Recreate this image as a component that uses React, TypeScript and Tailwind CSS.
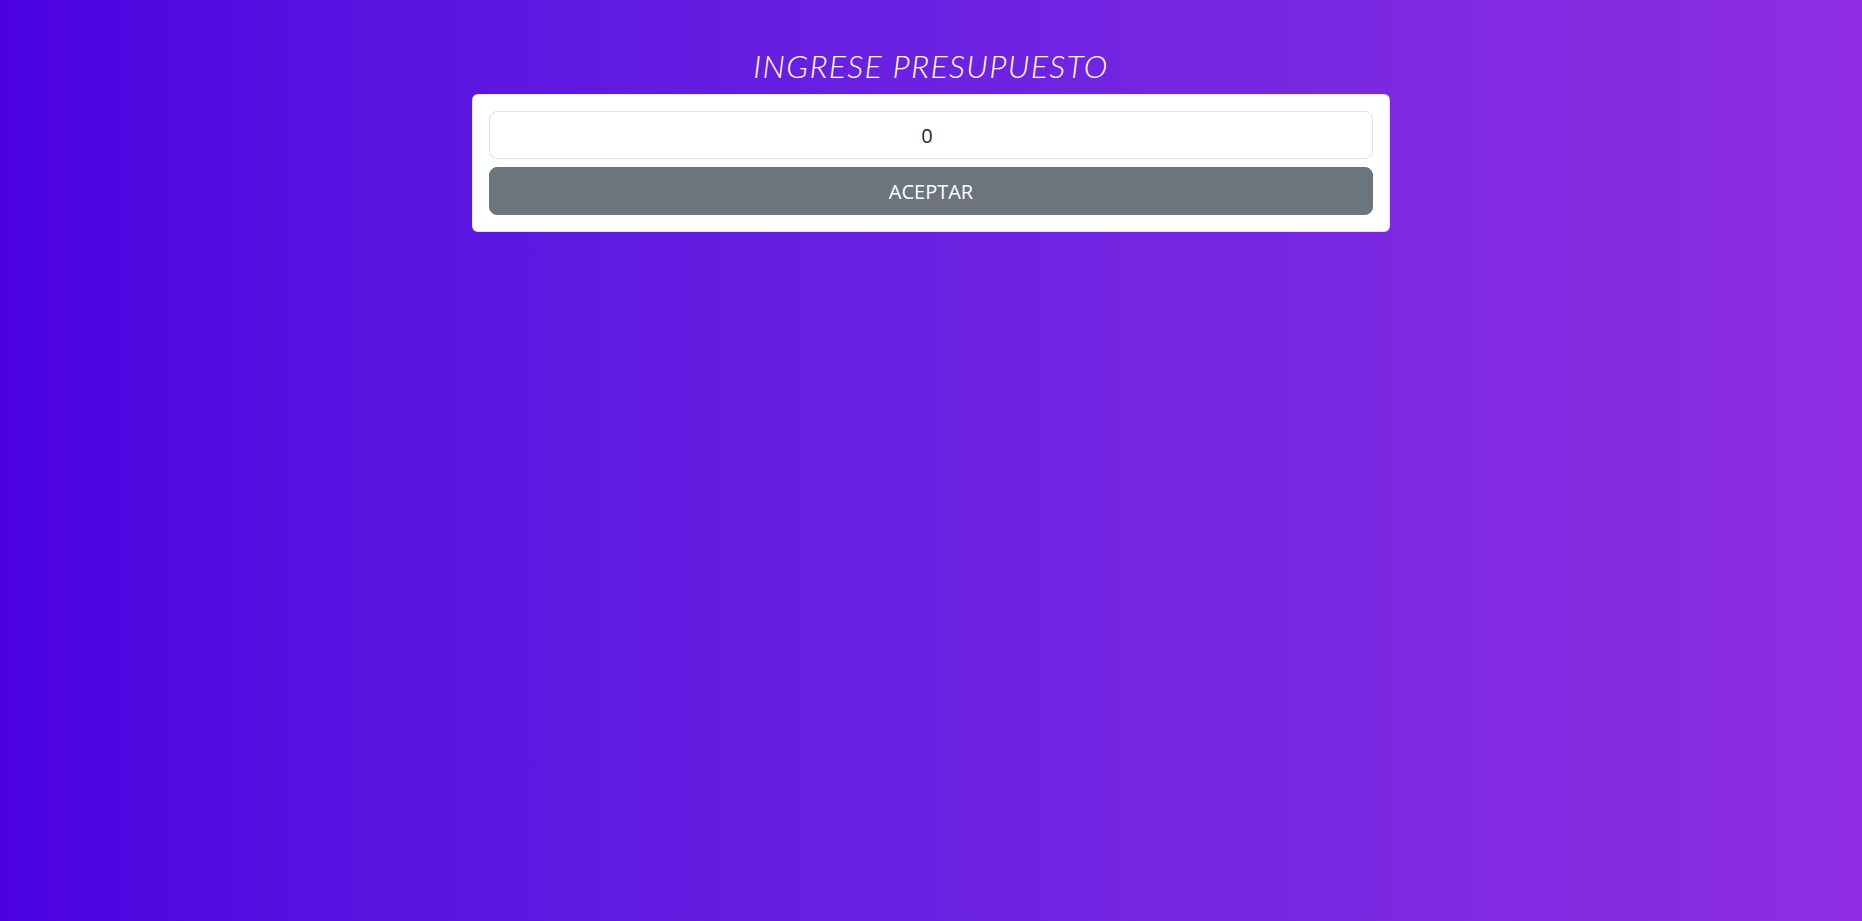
export default function App() {
  return (
    <div className="min-h-screen w-full bg-linear-to-r from-[#4a00e0] to-[#8e2de2] font-['Open_Sans',sans-serif]">
      <div className="flex flex-col items-center pt-[47px]">
        <h1 className="mb-[9px] font-['Lato',sans-serif] text-[32px] leading-[38px] font-light italic tracking-[1.3px] text-white">
          INGRESE PRESUPUESTO
        </h1>
        <div className="w-[918px] rounded-[6px] border border-black/10 bg-white p-4">
          <form className="flex flex-col gap-2" onSubmit={(e) => e.preventDefault()}>
            <input
              type="number"
              defaultValue={0}
              className="h-12 w-full rounded-lg border border-[#dee2e6] bg-white pl-4 pr-[24px] text-center text-[20px] text-[#212529] outline-none [appearance:textfield] [&::-webkit-inner-spin-button]:appearance-none"
            />
            <button
              type="submit"
              className="h-12 w-full rounded-lg border border-[#6c757d] bg-[#6c757d] pt-[2px] text-[20px] text-white"
            >
              ACEPTAR
            </button>
          </form>
        </div>
      </div>
    </div>
  );
}
